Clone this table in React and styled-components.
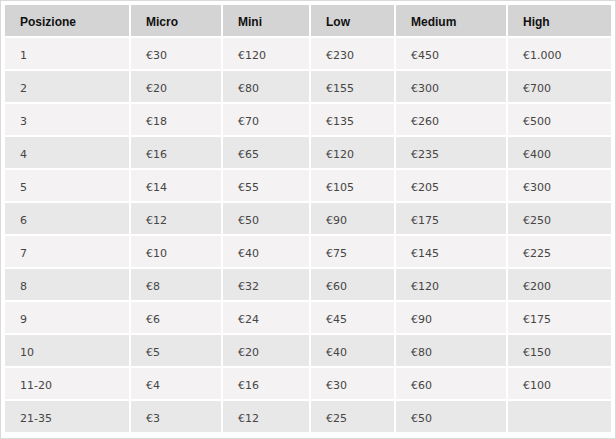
import styled, { createGlobalStyle } from 'styled-components';

const GlobalStyle = createGlobalStyle`
  html, body {
    margin: 0;
    padding: 0;
    background: #fff;
  }
`;

const Wrapper = styled.div`
  width: 616px;
  height: 439px;
  box-sizing: border-box;
  border: 1px solid #dadada;
  padding: 2px 2px 3px 2px;
  background: #fff;
`;

const Table = styled.table`
  border-collapse: separate;
  border-spacing: 2px;
  table-layout: fixed;
  width: 610px;
`;

const HeadCell = styled.th`
  background: #d4d4d4;
  height: 31px;
  padding: 2px 0 0 15px;
  box-sizing: border-box;
  text-align: left;
  font-family: "Liberation Sans", Arial, sans-serif;
  font-size: 12px;
  font-weight: bold;
  color: #111;
`;

const Row = styled.tr`
  background: ${(p) => (p.$even ? '#e9e8e8' : '#f4f2f2')};
`;

const Cell = styled.td`
  height: 31px;
  padding: 3px 0 0 15px;
  box-sizing: border-box;
  font-family: "DejaVu Sans", Verdana, sans-serif;
  font-size: 11px;
  color: #454545;
`;

const columns = [
  { label: 'Posizione', width: 124 },
  { label: 'Micro', width: 90 },
  { label: 'Mini', width: 86 },
  { label: 'Low', width: 83 },
  { label: 'Medium', width: 110 },
  { label: 'High', width: 103 },
];

const rows = [
  ['1', '€30', '€120', '€230', '€450', '€1.000'],
  ['2', '€20', '€80', '€155', '€300', '€700'],
  ['3', '€18', '€70', '€135', '€260', '€500'],
  ['4', '€16', '€65', '€120', '€235', '€400'],
  ['5', '€14', '€55', '€105', '€205', '€300'],
  ['6', '€12', '€50', '€90', '€175', '€250'],
  ['7', '€10', '€40', '€75', '€145', '€225'],
  ['8', '€8', '€32', '€60', '€120', '€200'],
  ['9', '€6', '€24', '€45', '€90', '€175'],
  ['10', '€5', '€20', '€40', '€80', '€150'],
  ['11-20', '€4', '€16', '€30', '€60', '€100'],
  ['21-35', '€3', '€12', '€25', '€50', ''],
];

export default function App() {
  return (
    <>
      <GlobalStyle />
      <Wrapper>
        <Table>
          <colgroup>
            {columns.map((c) => (
              <col key={c.label} style={{ width: c.width }} />
            ))}
          </colgroup>
          <thead>
            <tr>
              {columns.map((c) => (
                <HeadCell key={c.label}>{c.label}</HeadCell>
              ))}
            </tr>
          </thead>
          <tbody>
            {rows.map((r, i) => (
              <Row key={r[0]} $even={i % 2 === 1}>
                {r.map((v, j) => (
                  <Cell key={j}>{v}</Cell>
                ))}
              </Row>
            ))}
          </tbody>
        </Table>
      </Wrapper>
    </>
  );
}
